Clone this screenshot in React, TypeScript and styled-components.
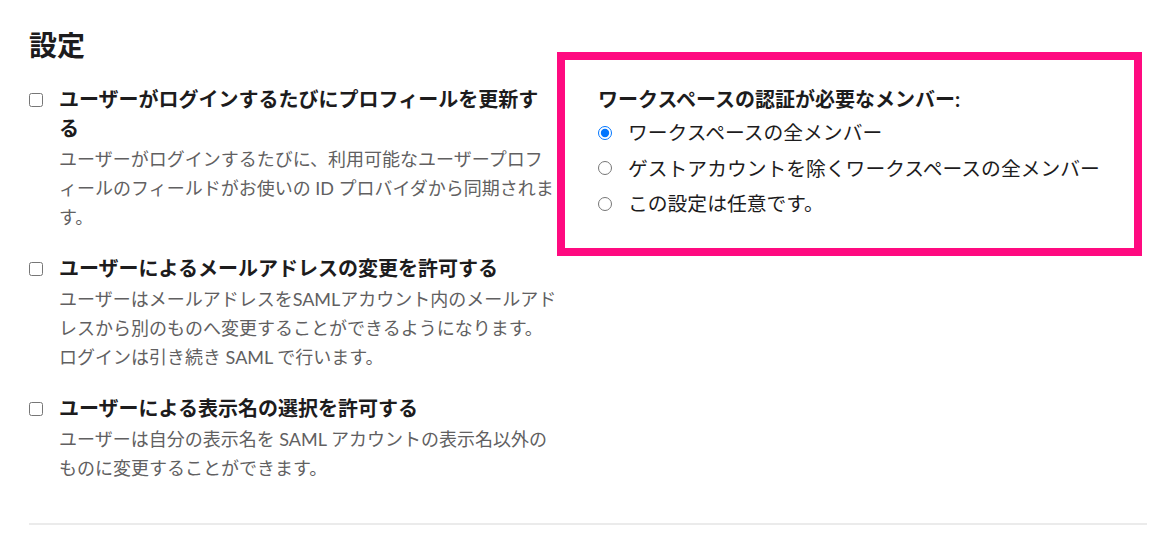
import React from 'react';
import styled, { createGlobalStyle } from 'styled-components';

const GlobalStyle = createGlobalStyle`
  body {
    margin: 0;
    background: #ffffff;
    font-family: "Lato", "Noto Sans CJK JP", sans-serif;
    color: #1d1c1d;
  }
`

interface Option {
  id: string;
  title: string;
  description: string[];
}

const options: Option[] = [
  {
    id: 'profile',
    title: 'ユーザーがログインするたびにプロフィールを更新する',
    description: [
      'ユーザーがログインするたびに、利用可能なユーザープロフィールのフィールドがお使いの ID プロバイダから同期されます。',
    ],
  },
  {
    id: 'email',
    title: 'ユーザーによるメールアドレスの変更を許可する',
    description: [
      'ユーザーはメールアドレスをSAMLアカウント内のメールアドレスから別のものへ変更することができるようになります。',
      'ログインは引き続き SAML で行います。',
    ],
  },
  {
    id: 'displayName',
    title: 'ユーザーによる表示名の選択を許可する',
    description: [
      'ユーザーは自分の表示名を SAML アカウントの表示名以外のものに変更することができます。',
    ],
  },
];

const members = [
  'ワークスペースの全メンバー',
  'ゲストアカウントを除くワークスペースの全メンバー',
  'この設定は任意です。',
];

const Page = styled.div`
  padding: 28px 21px 0 29px;
`

const Columns = styled.div`
  display: flex;
  align-items: flex-start;
`

const LeftColumn = styled.div`
  flex: 0 0 528px;
  display: flex;
  flex-direction: column;
`

const Heading = styled.h2`
  margin: 0 0 23px;
  font-size: 28px;
  line-height: 34px;
  font-weight: 700;
`

const OptionList = styled.ul`
  list-style: none;
  margin: 0;
  padding: 0;
  display: flex;
  flex-direction: column;
  gap: 22px;
`

const OptionRow = styled.li`
  display: flex;
  align-items: flex-start;
`

const Checkbox = styled.input.attrs({ type: 'checkbox' })`
  flex: 0 0 auto;
  width: 14px;
  height: 14px;
  margin: 8px 16px 0 0;
`

const OptionText = styled.div`
  flex: 1;
  min-width: 0;
`

const OptionTitle = styled.p`
  margin: 0;
  font-size: 20px;
  line-height: 29px;
  font-weight: 700;
`

const Description = styled.p`
  margin: 2px 0 0;
  font-size: 18px;
  line-height: 29px;
  color: #616061;

  & + & {
    margin-top: 0;
  }
`

const HighlightBox = styled.div`
  flex: 0 0 585px;
  box-sizing: border-box;
  margin-top: 24px;
  height: 204px;
  border: 8px solid #ff0a80;
  padding: 25px 16px 0 33px;
`

const BoxTitle = styled.p`
  margin: 0 0 4px;
  font-size: 20px;
  line-height: 29px;
  font-weight: 700;
`

const RadioList = styled.div`
  display: flex;
  flex-direction: column;
  gap: 6.5px;
`

const RadioRow = styled.label`
  display: flex;
  align-items: center;
  font-size: 19.8px;
  line-height: 29px;
`

const Radio = styled.input.attrs({ type: 'radio', name: 'members' })`
  flex: 0 0 auto;
  width: 14px;
  height: 14px;
  margin: 0 16px 0 0;
`

const Divider = styled.hr`
  margin: 40px 0 0;
  border: none;
  height: 2px;
  background: #ebebeb;
`

const App: React.FC = () => {
  return (
    <>
      <GlobalStyle />
      <Page>
        <Columns>
          <LeftColumn>
            <Heading>設定</Heading>
            <OptionList>
              {options.map((option) => (
                <OptionRow key={option.id}>
                  <Checkbox />
                  <OptionText>
                    <OptionTitle>{option.title}</OptionTitle>
                    {option.description.map((line) => (
                      <Description key={line}>{line}</Description>
                    ))}
                  </OptionText>
                </OptionRow>
              ))}
            </OptionList>
          </LeftColumn>
          <HighlightBox>
            <BoxTitle>ワークスペースの認証が必要なメンバー:</BoxTitle>
            <RadioList>
              {members.map((label, index) => (
                <RadioRow key={label}>
                  <Radio defaultChecked={index === 0} />
                  {label}
                </RadioRow>
              ))}
            </RadioList>
          </HighlightBox>
        </Columns>
        <Divider />
      </Page>
    </>
  );
}

export default App;
